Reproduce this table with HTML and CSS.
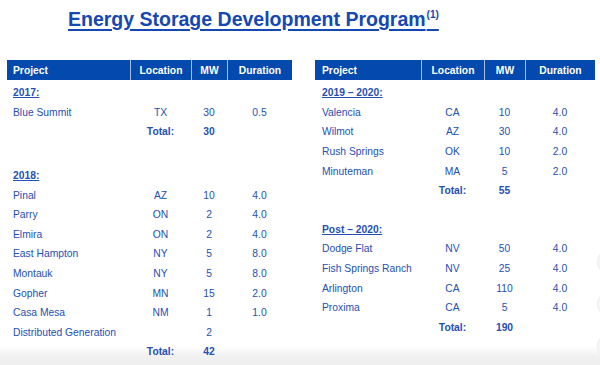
FILE: index.html
```html
<!DOCTYPE html>
<html lang="en">
  <head>
    <meta charset="UTF-8">
    <title>Energy Storage Development Program</title>
    <link rel="stylesheet" href="styles.css">
  </head>
  <body>
    <h1 class="title"><span class="title-text">Energy Storage Development Program<sup>(1)</sup></span></h1>

    <div class="tables">
      <table class="projects left">
        <colgroup>
          <col style="width: 123px">
          <col style="width: 61px">
          <col style="width: 36px">
          <col style="width: 65px">
        </colgroup>
        <thead>
          <tr><th class="name">Project</th><th>Location</th><th>MW</th><th>Duration</th></tr>
        </thead>
        <tbody>
          <tr class="first"><td class="section" colspan="4"><span>2017:</span></td></tr>
          <tr><td class="name">Blue Summit</td><td>TX</td><td>30</td><td>0.5</td></tr>
          <tr class="total"><td></td><td>Total:</td><td>30</td><td></td></tr>
          <tr class="spacer wide"><td colspan="4"></td></tr>
          <tr><td class="section" colspan="4"><span>2018:</span></td></tr>
          <tr><td class="name">Pinal</td><td>AZ</td><td>10</td><td>4.0</td></tr>
          <tr><td class="name">Parry</td><td>ON</td><td>2</td><td>4.0</td></tr>
          <tr><td class="name">Elmira</td><td>ON</td><td>2</td><td>4.0</td></tr>
          <tr><td class="name">East Hampton</td><td>NY</td><td>5</td><td>8.0</td></tr>
          <tr><td class="name">Montauk</td><td>NY</td><td>5</td><td>8.0</td></tr>
          <tr><td class="name">Gopher</td><td>MN</td><td>15</td><td>2.0</td></tr>
          <tr><td class="name">Casa Mesa</td><td>NM</td><td>1</td><td>1.0</td></tr>
          <tr><td class="name">Distributed Generation</td><td></td><td>2</td><td></td></tr>
          <tr class="total"><td></td><td>Total:</td><td>42</td><td></td></tr>
        </tbody>
      </table>

      <table class="projects right">
        <colgroup>
          <col style="width: 106px">
          <col style="width: 63px">
          <col style="width: 41px">
          <col style="width: 70px">
        </colgroup>
        <thead>
          <tr><th class="name">Project</th><th>Location</th><th>MW</th><th>Duration</th></tr>
        </thead>
        <tbody>
          <tr class="first"><td class="section" colspan="4"><span>2019 – 2020:</span></td></tr>
          <tr><td class="name">Valencia</td><td>CA</td><td>10</td><td>4.0</td></tr>
          <tr><td class="name">Wilmot</td><td>AZ</td><td>30</td><td>4.0</td></tr>
          <tr><td class="name">Rush Springs</td><td>OK</td><td>10</td><td>2.0</td></tr>
          <tr><td class="name">Minuteman</td><td>MA</td><td>5</td><td>2.0</td></tr>
          <tr class="total"><td></td><td>Total:</td><td>55</td><td></td></tr>
          <tr class="spacer"><td colspan="4"></td></tr>
          <tr><td class="section" colspan="4"><span>Post – 2020:</span></td></tr>
          <tr><td class="name">Dodge Flat</td><td>NV</td><td>50</td><td>4.0</td></tr>
          <tr><td class="name">Fish Springs Ranch</td><td>NV</td><td>25</td><td>4.0</td></tr>
          <tr><td class="name">Arlington</td><td>CA</td><td>110</td><td>4.0</td></tr>
          <tr><td class="name">Proxima</td><td>CA</td><td>5</td><td>4.0</td></tr>
          <tr class="total"><td></td><td>Total:</td><td>190</td><td></td></tr>
        </tbody>
      </table>
    </div>

    <div class="side-dots">
      <span class="dot"></span>
      <span class="dot"></span>
      <span class="dot"></span>
    </div>
  </body>
</html>
```

FILE: styles.css
```css
:root {
  font-family: "Liberation Sans", Arial, sans-serif;
  --blue-head: #0449ae;
  --blue-text: #2550b3;
  --blue-title: #1448b2;
}

html, body {
  margin: 0;
}

body {
  position: relative;
  min-height: 365px;
  overflow: hidden;
  background: linear-gradient(to bottom, #fff 0, #fff 346px, #f1f1f1 356px, #eeeeee 365px);
}

.title {
  margin: 0;
  padding: 7px 0 0 68px;
  height: 34px;
  box-sizing: border-box;
  font-size: 19.5px;
  line-height: 24px;
  font-weight: bold;
  color: var(--blue-title);
}
.title-text {
  text-decoration: underline;
  text-decoration-thickness: 2px;
  text-underline-offset: 3px;
}
.title sup {
  font-size: 10px;
  vertical-align: 8px;
  line-height: 0;
  margin-left: 1px;
}

.tables {
  display: flex;
  align-items: flex-start;
  gap: 23px;
  padding: 26px 0 0 7px;
}

.projects {
  border-collapse: separate;
  border-spacing: 0;
  table-layout: fixed;
  font-size: 10.3px;
  color: var(--blue-text);
  th {
    height: 20px;
    padding: 0;
    background-color: var(--blue-head);
    color: #fff;
    font-weight: bold;
    text-align: center;
    border-left: 1px solid #a9bde4;
  }
  th:first-child {
    border-left: none;
  }
  td {
    height: 19.6px;
    padding: 0;
    text-align: center;
    white-space: nowrap;
  }
  .name {
    text-align: left;
    padding-left: 6px;
  }
  .section {
    text-align: left;
    padding-left: 6px;
    font-weight: bold;
    span {
      text-decoration: underline;
      text-underline-offset: 1px;
    }
  }
  .first td {
    padding-top: 3px;
  }
  .total td {
    font-weight: bold;
  }
  .spacer td {
    height: 19px;
  }
  .spacer.wide td {
    height: 24px;
  }
}

.projects.right {
  .name, .section {
    padding-left: 7px;
  }
}

.side-dots {
  position: absolute;
  left: 597px;
  top: 249px;
  display: flex;
  flex-direction: column;
  gap: 16px;
  .dot {
    width: 24px;
    height: 24px;
    border-radius: 50%;
    background-color: #f7f7f7;
    border: 1px solid #ebebeb;
  }
}
```
